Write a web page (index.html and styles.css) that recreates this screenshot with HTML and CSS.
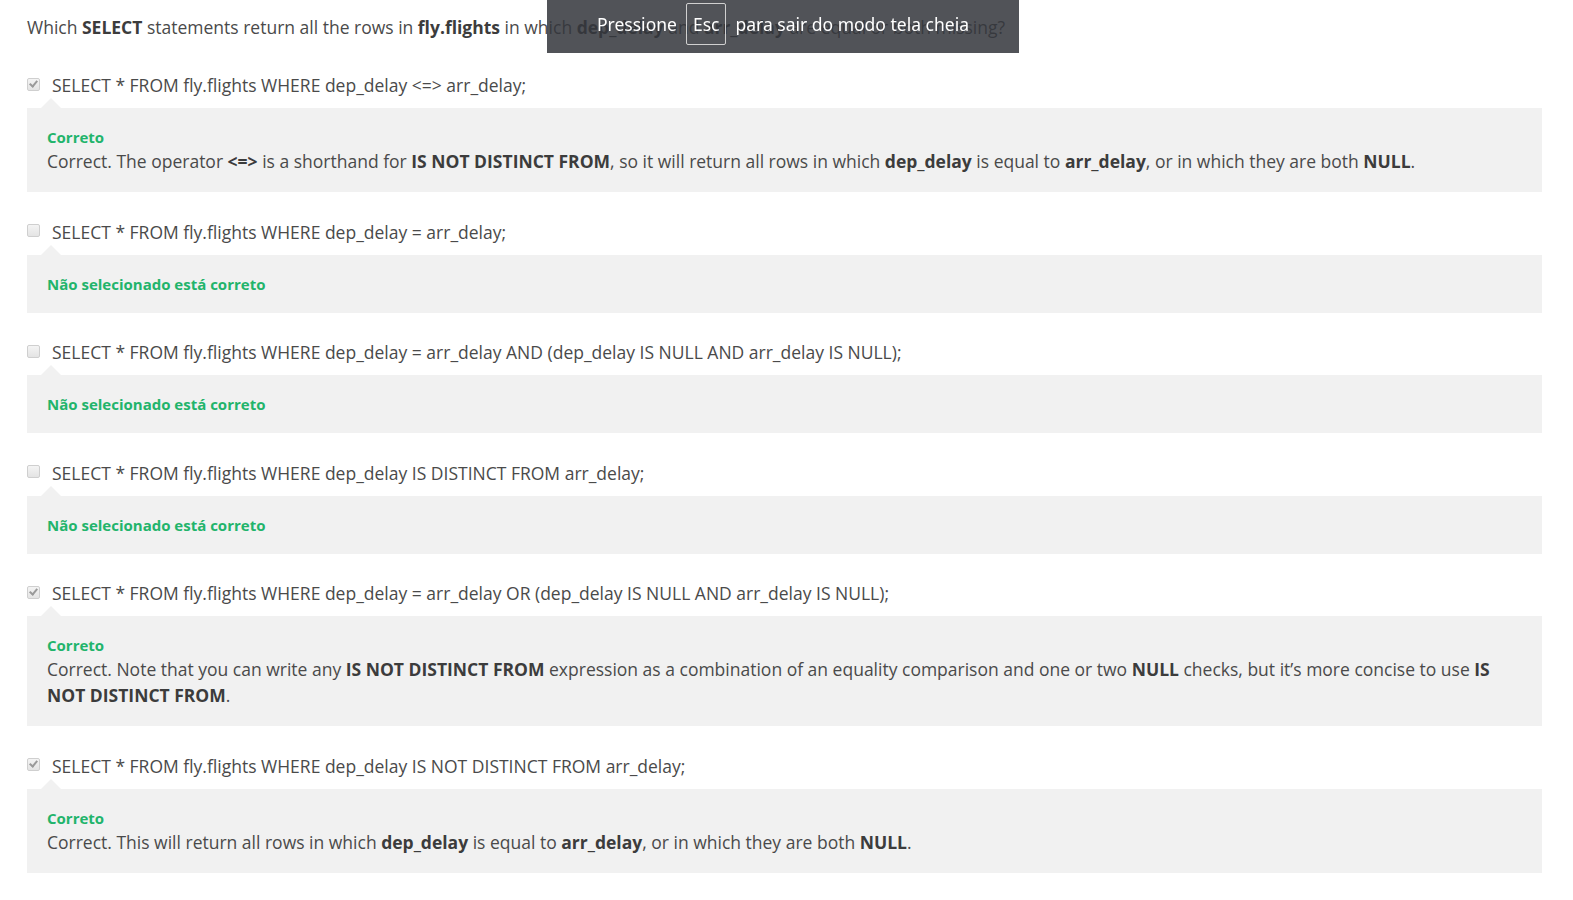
FILE: index.html
```html
<!DOCTYPE html>
<html lang="pt">
<head>
<meta charset="utf-8">
<title>Quiz</title>
<link rel="stylesheet" href="styles.css">
</head>
<body>
<div class="page">
  <p class="question">Which <b>SELECT</b> statements return all the rows in <b>fly.flights</b> in which <b>dep_delay</b> and <b>arr_delay</b> are equal or both missing?</p>

  <div class="option">
    <div class="opt-row"><span class="cb checked"></span><span class="opt-text">SELECT * FROM fly.flights WHERE dep_delay &lt;=&gt; arr_delay;</span></div>
    <div class="feedback">
      <div class="verdict">Correto</div>
      <div class="explain">Correct. The operator <b>&lt;=&gt;</b> is a shorthand for <b>IS NOT DISTINCT FROM</b>, so it will return all rows in which <b>dep_delay</b> is equal to <b>arr_delay</b>, or in which they are both <b>NULL</b>.</div>
    </div>
  </div>

  <div class="option">
    <div class="opt-row"><span class="cb"></span><span class="opt-text">SELECT * FROM fly.flights WHERE dep_delay = arr_delay;</span></div>
    <div class="feedback">
      <div class="verdict">Não selecionado está correto</div>
    </div>
  </div>

  <div class="option">
    <div class="opt-row"><span class="cb"></span><span class="opt-text">SELECT * FROM fly.flights WHERE dep_delay = arr_delay AND (dep_delay IS NULL AND arr_delay IS NULL);</span></div>
    <div class="feedback">
      <div class="verdict">Não selecionado está correto</div>
    </div>
  </div>

  <div class="option">
    <div class="opt-row"><span class="cb"></span><span class="opt-text">SELECT * FROM fly.flights WHERE dep_delay IS DISTINCT FROM arr_delay;</span></div>
    <div class="feedback">
      <div class="verdict">Não selecionado está correto</div>
    </div>
  </div>

  <div class="option">
    <div class="opt-row"><span class="cb checked"></span><span class="opt-text">SELECT * FROM fly.flights WHERE dep_delay = arr_delay OR (dep_delay IS NULL AND arr_delay IS NULL);</span></div>
    <div class="feedback">
      <div class="verdict">Correto</div>
      <div class="explain">Correct. Note that you can write any <b>IS NOT DISTINCT FROM</b> expression as a combination of an equality comparison and one or two <b>NULL</b> checks, but it’s more concise to use <b>IS NOT DISTINCT FROM</b>.</div>
    </div>
  </div>

  <div class="option">
    <div class="opt-row"><span class="cb checked"></span><span class="opt-text">SELECT * FROM fly.flights WHERE dep_delay IS NOT DISTINCT FROM arr_delay;</span></div>
    <div class="feedback">
      <div class="verdict">Correto</div>
      <div class="explain">Correct. This will return all rows in which <b>dep_delay</b> is equal to <b>arr_delay</b>, or in which they are both <b>NULL</b>.</div>
    </div>
  </div>
</div>

<div class="fs-bubble">
  <span>Pressione</span><span class="key">Esc</span><span>para sair do modo tela cheia</span>
</div>
</body>
</html>
```

FILE: styles.css
```css
html, body {
  margin: 0;
  padding: 0;
  background: #ffffff;
}

body {
  font-family: "Open Sans", "Liberation Sans", sans-serif;
  color: #4a4a4a;
  font-size: 17.5px;
}

b {
  font-weight: 700;
  color: #3c3c3c;
}

.page {
  padding: 14px 31px 0 27px;
}

.question {
  margin: 0;
  line-height: 26px;
}

.option {
  margin-top: 26.5px;
}

.page .question + .option {
  margin-top: 32px;
}

.opt-row {
  display: flex;
  align-items: center;
  height: 26px;
  line-height: 26px;
}

.cb {
  flex: none;
  width: 11px;
  height: 11px;
  border: 1px solid #cfcfcf;
  border-radius: 2px;
  background: linear-gradient(#f4f4f4, #e4e4e4);
  margin-right: 12px;
  margin-top: -2px;
  position: relative;
}

.cb.checked::after {
  content: "";
  position: absolute;
  left: 3px;
  top: 0px;
  width: 3px;
  height: 6px;
  border: solid #9a9a9a;
  border-width: 0 2px 2px 0;
  transform: rotate(40deg);
}

.feedback {
  position: relative;
  margin-top: 10px;
  background: #f1f1f1;
  padding: 18px 20px 18px 20px;
}

.feedback::before {
  content: "";
  position: absolute;
  left: 14px;
  top: -10px;
  border-left: 10px solid transparent;
  border-right: 10px solid transparent;
  border-bottom: 10px solid #f1f1f1;
}

.verdict {
  color: #22b46b;
  font-weight: 700;
  font-size: 15px;
  line-height: 22px;
}

.explain {
  line-height: 26px;
}

.fs-bubble {
  position: fixed;
  top: 0;
  left: 547px;
  width: 472px;
  height: 53px;
  box-sizing: border-box;
  background: rgba(52, 55, 60, 0.86);
  color: #ffffff;
  display: flex;
  align-items: center;
  justify-content: center;
  gap: 9px;
  font-family: "Noto Sans", "Open Sans", sans-serif;
  font-size: 17.5px;
  padding-bottom: 6px;
}

.fs-bubble .key {
  border: 1px solid #d0d0d0;
  border-radius: 2px;
  padding: 7px 6px;
  line-height: 26px;
}
```
